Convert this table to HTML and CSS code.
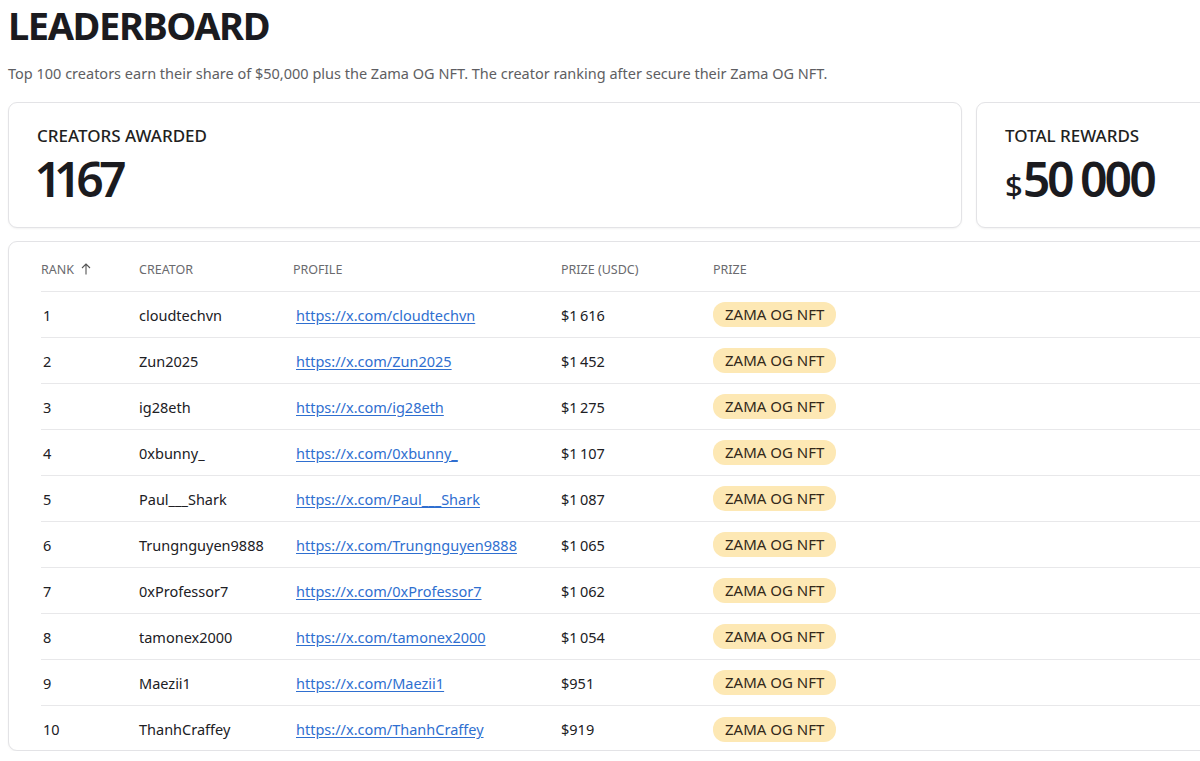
FILE: index.html
```html
<!DOCTYPE html>
<html lang="en">
<head>
<meta charset="utf-8">
<title>Leaderboard</title>
<link rel="stylesheet" href="styles.css">
</head>
<body>
<div class="page">
  <h1 class="title">LEADERBOARD</h1>
  <p class="subtitle">Top 100 creators earn their share of $50,000 plus the Zama OG NFT. The creator ranking after secure their Zama OG NFT.</p>

  <div class="stats">
    <div class="card stat stat-main">
      <div class="stat-label">CREATORS AWARDED</div>
      <div class="stat-value">1167</div>
    </div>
    <div class="card stat stat-side">
      <div class="stat-label">TOTAL REWARDS</div>
      <div class="stat-value"><span class="currency">$</span>50&nbsp;000</div>
    </div>
  </div>

  <div class="card table-card">
    <div class="row head">
      <div class="cell rank-head">RANK
        <svg class="sort" width="10" height="12" viewBox="0 0 10 12" aria-hidden="true"><path d="M5 11.5V1M1 5l4-4 4 4" fill="none" stroke="#555" stroke-width="1.1"/></svg>
      </div>
      <div class="cell">CREATOR</div>
      <div class="cell">PROFILE</div>
      <div class="cell">PRIZE (USDC)</div>
      <div class="cell">PRIZE</div>
    </div>

    <div class="row"><div class="cell num">1</div><div class="cell">cloudtechvn</div><div class="cell"><a class="link" href="#">https://x.com/cloudtechvn</a></div><div class="cell">$1&#8239;616</div><div class="cell"><span class="badge">ZAMA OG NFT</span></div></div>
    <div class="row"><div class="cell num">2</div><div class="cell">Zun2025</div><div class="cell"><a class="link" href="#">https://x.com/Zun2025</a></div><div class="cell">$1&#8239;452</div><div class="cell"><span class="badge">ZAMA OG NFT</span></div></div>
    <div class="row"><div class="cell num">3</div><div class="cell">ig28eth</div><div class="cell"><a class="link" href="#">https://x.com/ig28eth</a></div><div class="cell">$1&#8239;275</div><div class="cell"><span class="badge">ZAMA OG NFT</span></div></div>
    <div class="row"><div class="cell num">4</div><div class="cell">0xbunny_</div><div class="cell"><a class="link" href="#">https://x.com/0xbunny_</a></div><div class="cell">$1&#8239;107</div><div class="cell"><span class="badge">ZAMA OG NFT</span></div></div>
    <div class="row"><div class="cell num">5</div><div class="cell">Paul___Shark</div><div class="cell"><a class="link" href="#">https://x.com/Paul___Shark</a></div><div class="cell">$1&#8239;087</div><div class="cell"><span class="badge">ZAMA OG NFT</span></div></div>
    <div class="row"><div class="cell num">6</div><div class="cell">Trungnguyen9888</div><div class="cell"><a class="link" href="#">https://x.com/Trungnguyen9888</a></div><div class="cell">$1&#8239;065</div><div class="cell"><span class="badge">ZAMA OG NFT</span></div></div>
    <div class="row"><div class="cell num">7</div><div class="cell">0xProfessor7</div><div class="cell"><a class="link" href="#">https://x.com/0xProfessor7</a></div><div class="cell">$1&#8239;062</div><div class="cell"><span class="badge">ZAMA OG NFT</span></div></div>
    <div class="row"><div class="cell num">8</div><div class="cell">tamonex2000</div><div class="cell"><a class="link" href="#">https://x.com/tamonex2000</a></div><div class="cell">$1&#8239;054</div><div class="cell"><span class="badge">ZAMA OG NFT</span></div></div>
    <div class="row"><div class="cell num">9</div><div class="cell">Maezii1</div><div class="cell"><a class="link" href="#">https://x.com/Maezii1</a></div><div class="cell">$951</div><div class="cell"><span class="badge">ZAMA OG NFT</span></div></div>
    <div class="row last"><div class="cell num">10</div><div class="cell">ThanhCraffey</div><div class="cell"><a class="link" href="#">https://x.com/ThanhCraffey</a></div><div class="cell">$919</div><div class="cell"><span class="badge">ZAMA OG NFT</span></div></div>
  </div>
</div>
</body>
</html>
```

FILE: styles.css
```css
html, body {
  margin: 0;
  padding: 0;
  background: #ffffff;
  overflow: hidden;
}

body {
  font-family: "Noto Sans", "Open Sans", sans-serif;
  color: #1f1f22;
}

.page {
  width: 1500px;
  padding: 0 8px;
}

.title {
  margin: 0;
  padding-top: 2px;
  font-size: 38px;
  line-height: 46px;
  font-weight: 700;
  letter-spacing: -1.4px;
  color: #1b1b1f;
}

.subtitle {
  margin: 15px 0 0;
  font-size: 14.5px;
  line-height: 20px;
  color: #5e5e62;
}

.card {
  background: #fff;
  border: 1px solid #e3e3e6;
  border-radius: 9px;
  box-shadow: 0 1px 2px rgba(0, 0, 0, 0.05);
}

.stats {
  display: flex;
  gap: 14px;
  margin-top: 19px;
}

.stat {
  box-sizing: border-box;
  height: 126px;
  padding: 23px 28px 0;
}

.stat-main {
  flex: 0 0 954px;
}

.stat-side {
  flex: 0 0 420px;
}

.stat-label {
  font-size: 17px;
  line-height: 20px;
  font-weight: 500;
  color: #1f1f22;
}

.stat-value {
  font-size: 48px;
  line-height: 66px;
  font-weight: 600;
  letter-spacing: -4px;
  font-variant-numeric: proportional-nums;
  color: #1b1b1f;
}

.currency {
  font-size: 31px;
  font-weight: 500;
  letter-spacing: 0;
  margin-right: 0;
}

.table-card {
  margin-top: 13px;
  width: 1480px;
  padding: 5px 0 0 32px;
  box-sizing: border-box;
}

.row {
  box-sizing: border-box;
  display: grid;
  grid-template-columns: 98px 154px 268px 152px 1fr;
  align-items: center;
  height: 46px;
  border-bottom: 1px solid #e8e8ea;
  font-size: 14.5px;
  color: #202024;
}

.row.head {
  height: 45px;
  font-size: 12.5px;
  color: #6a6a6e;
}

.row.last {
  border-bottom: none;
  height: 44px;
  padding-top: 2px;
}

.cell {
  white-space: nowrap;
}

.rank-head {
  display: flex;
  align-items: center;
  gap: 7px;
}

.sort {
  display: block;
}

.num {
  padding-left: 2px;
}

.link {
  color: #2f6fd0;
  text-decoration: underline;
  text-underline-offset: 2px;
  padding-left: 3px;
}

.badge {
  display: inline-block;
  background: #fde8b4;
  color: #33291a;
  border-radius: 12px;
  padding: 0 12px;
  line-height: 25px;
  font-size: 15px;
}
```
